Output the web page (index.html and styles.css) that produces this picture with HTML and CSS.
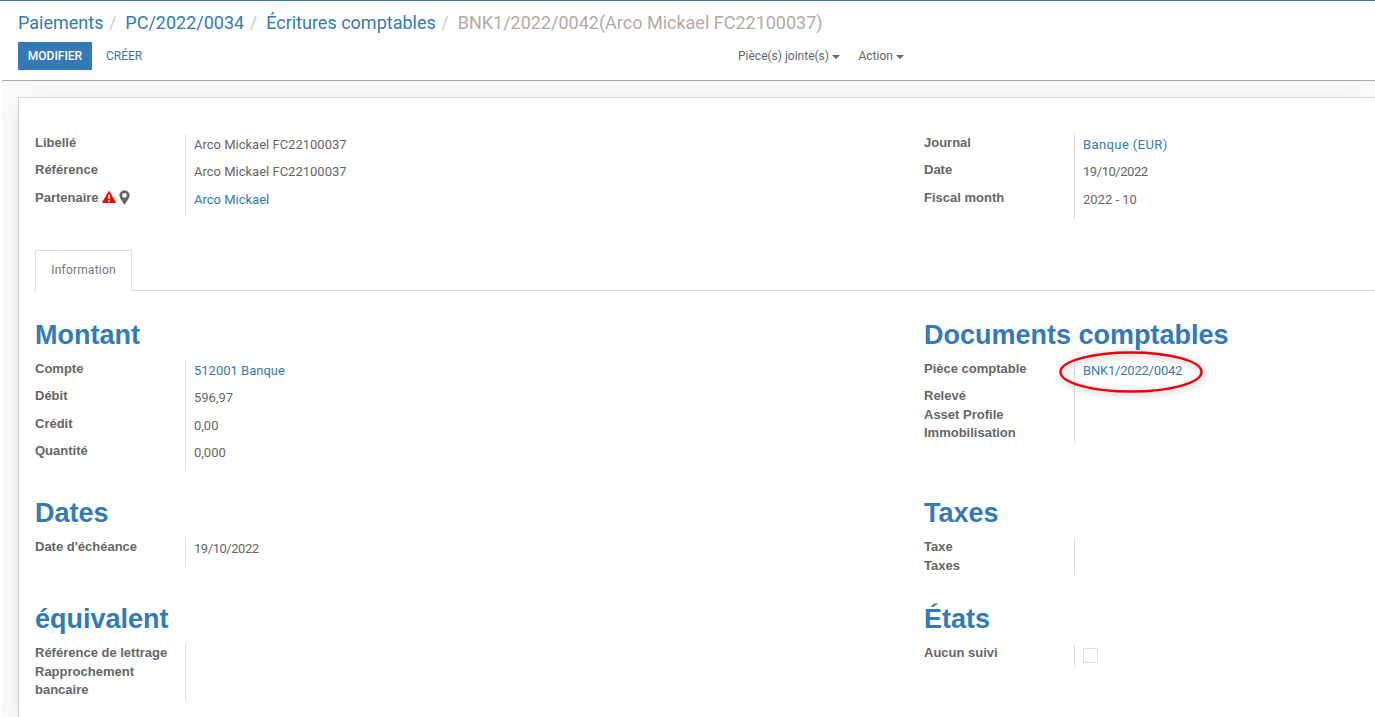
FILE: index.html
```html
<!DOCTYPE html>
<html>
<head>
  <title>BNK1/2022/0042</title>
  <link rel="stylesheet" href="styles.css">
</head>
<body>
<div class="page">

  <!-- Control Panel -->
  <div class="control-panel">
    <ol class="breadcrumb">
      <li><a href="#">Paiements</a></li>
      <li><a href="#">PC/2022/0034</a></li>
      <li><a href="#">Écritures comptables</a></li>
      <li class="active">BNK1/2022/0042(Arco Mickael FC22100037)</li>
    </ol>
    <div class="panel-bar">
      <div class="panel-buttons">
        <button class="btn-primary">MODIFIER</button>
        <button class="btn-link">CRÉER</button>
      </div>
      <div class="panel-sidebar">
        <span class="dropdown">Pièce(s) jointe(s)<i class="caret"></i></span>
        <span class="dropdown">Action<i class="caret"></i></span>
      </div>
    </div>
  </div>

  <!-- Form Sheet -->
  <div class="sheet">

    <div class="columns top-group">
      <table class="fields">
        <tr><td class="label">Libellé</td><td class="value">Arco Mickael FC22100037</td></tr>
        <tr><td class="label">Référence</td><td class="value">Arco Mickael FC22100037</td></tr>
        <tr>
          <td class="label">Partenaire
            <svg class="icon-warn" viewBox="0 0 16 14"><path d="M8 0.4 L15.8 13.6 L0.2 13.6 Z" fill="#f00" stroke="#f00" stroke-linejoin="round"/><rect x="7" y="4.4" width="2" height="5" fill="#fff"/><rect x="7" y="10.4" width="2" height="2" fill="#fff"/></svg>
            <svg class="icon-pin" viewBox="0 0 12 16"><path fill-rule="evenodd" d="M6 0a5.6 5.6 0 0 0-5.6 5.6C.4 8.6 4 13 6 16c2-3 5.6-7.4 5.6-10.4A5.6 5.6 0 0 0 6 0zm0 3a2.6 2.6 0 1 1 0 5.2A2.6 2.6 0 0 1 6 3z" fill="#666"/></svg>
          </td>
          <td class="value"><a href="#">Arco Mickael</a></td>
        </tr>
      </table>
      <table class="fields">
        <tr><td class="label">Journal</td><td class="value"><a href="#" class="wide">Banque (EUR)</a></td></tr>
        <tr><td class="label">Date</td><td class="value date">19/10/2022</td></tr>
        <tr><td class="label">Fiscal month</td><td class="value tall">2022 - 10</td></tr>
      </table>
    </div>

    <div class="tabs">
      <div class="tab">Information</div>
    </div>

    <div class="columns sections">
      <section>
        <h2>Montant</h2>
        <table class="fields">
          <tr><td class="label">Compte</td><td class="value"><a href="#">512001 Banque</a></td></tr>
          <tr><td class="label">Débit</td><td class="value">596,97</td></tr>
          <tr><td class="label">Crédit</td><td class="value">0,00</td></tr>
          <tr><td class="label">Quantité</td><td class="value">0,000</td></tr>
        </table>
      </section>
      <section>
        <h2>Documents comptables</h2>
        <table class="fields">
          <tr>
            <td class="label">Pièce comptable</td>
            <td class="value"><span class="circled"><a href="#" class="move-ref">BNK1/2022/0042</a>
              <!-- Red hand-drawn annotation -->
              <svg class="annotation" viewBox="0 0 146 46"><ellipse cx="72" cy="22" rx="70.5" ry="19.5" fill="none" stroke="#f0000f" stroke-width="2.4"/></svg>
            </span></td>
          </tr>
          <tr><td class="label">Relevé</td><td class="value empty"></td></tr>
          <tr><td class="label">Asset Profile</td><td class="value empty"></td></tr>
          <tr><td class="label">Immobilisation</td><td class="value empty"></td></tr>
        </table>
      </section>

      <section>
        <h2>Dates</h2>
        <table class="fields">
          <tr><td class="label">Date d'échéance</td><td class="value date">19/10/2022</td></tr>
        </table>
      </section>
      <section>
        <h2>Taxes</h2>
        <table class="fields">
          <tr><td class="label">Taxe</td><td class="value empty"></td></tr>
          <tr><td class="label">Taxes</td><td class="value empty"></td></tr>
        </table>
      </section>

      <section>
        <h2>équivalent</h2>
        <table class="fields">
          <tr><td class="label roomy">Référence de lettrage</td><td class="value empty"></td></tr>
          <tr><td class="label">Rapprochement<br>bancaire</td><td class="value empty"></td></tr>
        </table>
      </section>
      <section>
        <h2>États</h2>
        <table class="fields">
          <tr><td class="label">Aucun suivi</td><td class="value check-cell"><span class="checkbox"></span></td></tr>
        </table>
      </section>
    </div>

  </div>

</div>
</body>
</html>
```

FILE: styles.css
```css
html, body {
  height: 100%;
}

body {
  box-sizing: border-box;
  margin: 0;
  overflow: hidden;
  background-color: #fff;
  border-top: 1px solid #337ab7;
  font-family: 'Roboto', sans-serif;
  font-size: 13px;
  color: #666;
}

a {
  color: #337ab7;
  text-decoration: none;
}

.page {
  height: 100%;
  margin-left: 2px;
  background-color: #f9f9f9;
}

/* Control Panel */
.control-panel {
  height: 78px;
  padding: 1px 0 0 16px;
  background-color: #fff;
  border-bottom: 1px solid #aaa;
}

.breadcrumb {
  display: flex;
  list-style: none;
  margin: 0;
  padding: 10px 0 0;
  height: 30px;
  font-size: 18px;
  line-height: 21px;
}

.breadcrumb li + li:before {
  content: "/";
  color: #ccc;
  padding: 0 9px 0 5.5px;
}

.breadcrumb .active {
  color: #b3aaa5;
}

.panel-bar {
  display: flex;
  height: 28px;
}

.panel-buttons {
  display: flex;
  width: 720px;
}

.btn-primary, .btn-link {
  border: none;
  font-family: 'Roboto', sans-serif;
  font-size: 12px;
  height: 28px;
  cursor: pointer;
}

.btn-primary {
  width: 74px;
  padding: 0;
  background-color: #337ab7;
  color: #fff;
  font-weight: 500;
}

.btn-link {
  padding: 0 14px;
  background: none;
  color: #337ab7;
}

.panel-sidebar {
  display: flex;
  gap: 18.5px;
  align-items: center;
  font-size: 12px;
  color: #666;
}

.caret {
  display: inline-block;
  margin-left: 3px;
  vertical-align: middle;
  border-top: 4px solid #666;
  border-left: 4px solid transparent;
  border-right: 4px solid transparent;
}

/* Form Sheet */
.sheet {
  box-sizing: border-box;
  margin: 16px 0 0 16px;
  padding: 36px 0 0 16px;
  height: 620px;
  background-color: #fff;
  border: 1px solid #d4d4d4;
  border-right: none;
  border-bottom: none;
  box-shadow: 0 5px 20px -15px #000;
}

.columns {
  display: grid;
  grid-template-columns: 889px 1fr;
  align-items: start;
}

.top-group {
  height: 116px;
}

.sections {
  row-gap: 28.8px;
  margin-top: 29px;
}

.fields {
  border-collapse: collapse;
}

.fields td {
  padding: 0;
  vertical-align: top;
  line-height: 18.4px;
}

.label {
  width: 150px;
  min-width: 150px;
  font-family: 'Liberation Sans', sans-serif;
  font-weight: bold;
  color: #666;
}

.fields .label.roomy {
  line-height: 18.8px;
}

.fields .value {
  padding: 2px 0 7px 8px;
  border-left: 1px solid #ddd;
  min-width: 200px;
}

.fields .value.empty {
  padding: 0 0 0 8px;
}

.fields .value.tall {
  padding-bottom: 11px;
}

/* Windows hinting makes these a little narrower or wider in the original */
.date {
  letter-spacing: -0.45px;
}

.wide {
  letter-spacing: 0.4px;
}

.move-ref {
  letter-spacing: -0.2px;
}

.icon-warn {
  width: 14px;
  height: 12px;
  vertical-align: -1px;
}

.icon-pin {
  width: 11px;
  height: 15px;
  margin-left: -1px;
  vertical-align: -3px;
}

/* Tabs */
.tabs {
  height: 40px;
  border-bottom: 1px solid #ddd;
}

.tab {
  box-sizing: border-box;
  width: 97px;
  height: 41px;
  padding-top: 11px;
  text-align: center;
  background-color: #fff;
  border: 1px solid #ddd;
  border-bottom: none;
  font-size: 12px;
  letter-spacing: 0.2px;
  line-height: 16px;
  color: #777;
}

/* Sections */
h2 {
  margin: 0;
  height: 40px;
  font-family: 'Liberation Sans', sans-serif;
  font-size: 27px;
  font-weight: bold;
  line-height: 30px;
  color: #337ab7;
}

.circled {
  position: relative;
  display: inline-block;
}

.annotation {
  position: absolute;
  left: -24px;
  top: -12px;
  width: 146px;
  height: 46px;
  overflow: visible;
  filter: drop-shadow(1px 2px 3px rgba(0,0,0,0.3));
}

.fields .value.check-cell {
  padding: 4px 0 4px 8px;
  line-height: 0;
}

.checkbox {
  display: inline-block;
  box-sizing: border-box;
  width: 15px;
  height: 15px;
  border: 1px solid #ddd;
}
```
